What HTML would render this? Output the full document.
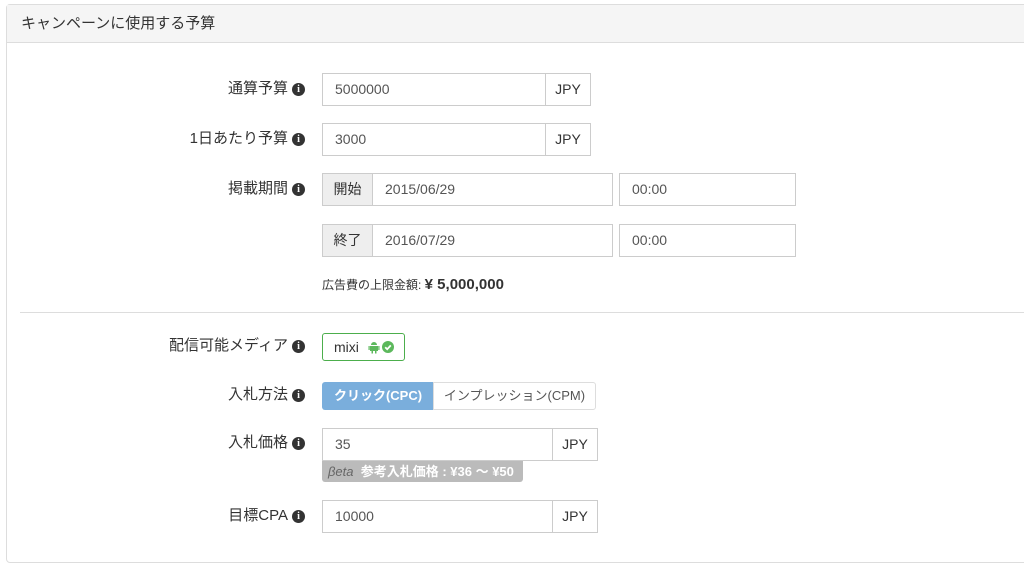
<!DOCTYPE html>
<html><head><meta charset="utf-8"><style>
body{margin:0;width:1024px;height:568px;background:#fff;font-family:"Liberation Sans","Noto Sans CJK JP",sans-serif;color:#333;position:relative;overflow:hidden}
.a{position:absolute;box-sizing:border-box}
.panel{left:6px;top:4px;width:1030px;height:559px;border:1px solid #ddd;border-radius:4px}
.hd{left:7px;top:5px;width:1030px;height:38px;background:#f5f5f5;border-bottom:1px solid #ddd;font-size:15px;line-height:37px;padding-left:14px}
.lbl{right:719px;font-size:15px;text-align:right;white-space:nowrap;line-height:20px}
.i{display:inline-block;width:13px;height:13px;border-radius:50%;background:#333;color:#fff;font:bold 10px/13px "Liberation Serif",serif;text-align:center;vertical-align:1px;margin-left:4px}
.in{border:1px solid #ccc;height:33px;font-size:14px;color:#555;line-height:31px;padding-left:12px;background:#fff}
.ad{border:1px solid #ccc;height:33px;font-size:14px;color:#333;line-height:31px;text-align:center;background:#fff}
.gad{background:#eee}
</style></head><body>
<div class="a panel"></div>
<div class="a hd">キャンペーンに使用する予算</div>

<div class="a lbl" style="top:79px">通算予算<span class="i">i</span></div>
<div class="a in" style="left:322px;top:73px;width:224px">5000000</div>
<div class="a ad" style="left:545px;top:73px;width:46px">JPY</div>

<div class="a lbl" style="top:129px">1日あたり予算<span class="i">i</span></div>
<div class="a in" style="left:322px;top:123px;width:224px">3000</div>
<div class="a ad" style="left:545px;top:123px;width:46px">JPY</div>

<div class="a lbl" style="top:179px">掲載期間<span class="i">i</span></div>
<div class="a ad gad" style="left:322px;top:173px;width:51px">開始</div>
<div class="a in" style="left:372px;top:173px;width:241px">2015/06/29</div>
<div class="a in" style="left:619px;top:173px;width:177px">00:00</div>
<div class="a ad gad" style="left:322px;top:224px;width:51px">終了</div>
<div class="a in" style="left:372px;top:224px;width:241px">2016/07/29</div>
<div class="a in" style="left:619px;top:224px;width:177px">00:00</div>
<div class="a" style="left:322px;top:276px;font-size:12px;line-height:18px">広告費の上限金額: <b style="font-size:15px">¥ 5,000,000</b></div>

<div class="a" style="left:20px;top:312px;width:1010px;height:1px;background:#ddd"></div>

<div class="a lbl" style="top:336px">配信可能メディア<span class="i">i</span></div>
<div class="a" style="left:322px;top:333px;width:83px;height:28px;border:1px solid #4cae4c;border-radius:3px;font-size:14px;line-height:26px;padding-left:11px">mixi
<svg style="position:absolute;left:45px;top:7px" width="12" height="13" viewBox="0 0 12 13"><path d="M2 5h8v5H2z M3 4a3 3 0 0 1 6 0z M0.5 5h1.2v4H0.5z M10.3 5h1.2v4h-1.2z M3.5 10h1.5v2.5H3.5z M7 10h1.5v2.5H7z" fill="#5cb85c"/></svg>
<svg style="position:absolute;left:59px;top:7px" width="12" height="12" viewBox="0 0 12 12"><circle cx="6" cy="6" r="6" fill="#5cb85c"/><path d="M3.2 6.2l2 2 3.6-3.8" stroke="#fff" stroke-width="1.8" fill="none"/></svg></div>

<div class="a lbl" style="top:385px">入札方法<span class="i">i</span></div>
<div class="a" style="left:322px;top:382px;width:112px;height:28px;background:#7aaedc;color:#fff;font-size:13px;font-weight:bold;line-height:28px;text-align:center;border-radius:3px 0 0 3px">クリック(CPC)</div>
<div class="a" style="left:433px;top:382px;width:163px;height:28px;border:1px solid #ddd;color:#555;font-size:13px;line-height:26px;text-align:center;border-radius:0 3px 3px 0">インプレッション(CPM)</div>

<div class="a lbl" style="top:433px">入札価格<span class="i">i</span></div>
<div class="a in" style="left:322px;top:428px;width:231px">35</div>
<div class="a ad" style="left:552px;top:428px;width:46px">JPY</div>
<div class="a" style="left:322px;top:461px;width:201px;height:21px;background:#bbb;color:#fff;font-size:13px;line-height:21px;padding-left:6px;border-radius:0 0 3px 3px"><i style="color:#666">βeta</i>&nbsp;&nbsp;<b style="font-weight:bold">参考入札価格 : ¥36 〜 ¥50</b></div>

<div class="a lbl" style="top:506px">目標CPA<span class="i">i</span></div>
<div class="a in" style="left:322px;top:500px;width:231px">10000</div>
<div class="a ad" style="left:552px;top:500px;width:46px">JPY</div>
</body></html>
